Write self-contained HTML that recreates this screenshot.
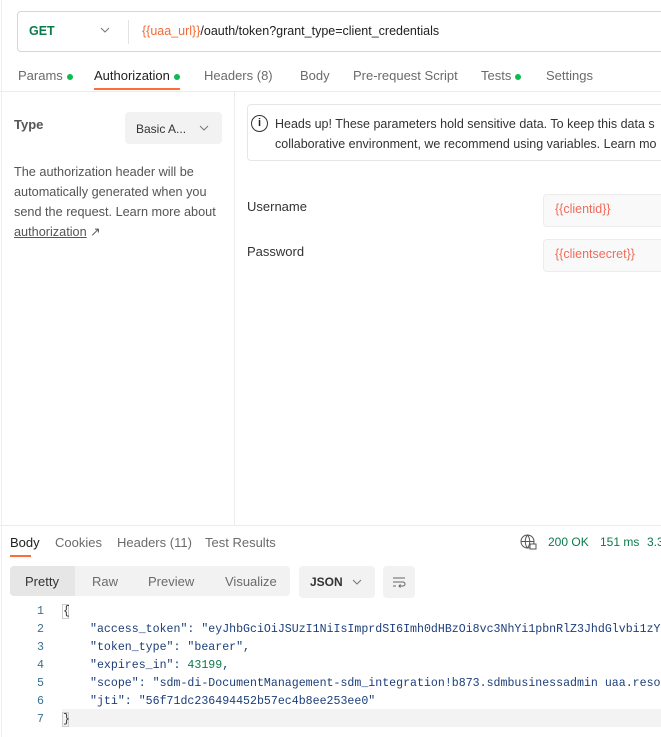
<!DOCTYPE html>
<html><head><style>
*{margin:0;padding:0;box-sizing:border-box}
html,body{width:661px;height:737px;overflow:hidden}
body{background:#fff;font-family:"Liberation Sans",sans-serif;font-size:13px;color:#212121;position:relative}
.a{position:absolute;white-space:nowrap}
.dot{display:inline-block;width:6px;height:6px;border-radius:3px;background:#0cbb52;margin-left:4px;vertical-align:middle}
.g{color:#6b6b6b}
.m{font-family:"Liberation Mono",monospace;font-size:11.6px;line-height:15px;color:#1c3e7a}
.ln{color:#3b6f8f;width:30px;text-align:right}
.chev{position:absolute}
</style></head><body>
<div class="a" style="left:1px;top:0;width:1px;height:737px;background:#eee"></div>
<div class="a" style="left:17px;top:11px;width:660px;height:41px;border:1px solid #d6d6d6;border-radius:4px"></div>
<div class="a" style="left:29px;top:24px;font-weight:bold;color:#0b7a4a;font-size:12.5px">GET</div>
<svg class="chev" style="left:100px;top:27px" width="10" height="6" viewBox="0 0 10 6" fill="none" stroke="#777" stroke-width="1"><path d="M1 1l4 4 4-4"/></svg>
<div class="a" style="left:128px;top:20px;width:1px;height:24px;background:#e3e3e3"></div>
<div class="a" style="left:142px;top:24px;font-size:12.5px"><span style="color:#f26b3a">{{uaa_url}}</span>/oauth/token?grant_type=client_credentials</div>

<div class="a g" style="left:18px;top:68px">Params<span class="dot"></span></div>
<div class="a" style="left:94px;top:68px;color:#212121">Authorization<span class="dot"></span></div>
<div class="a" style="left:94px;top:88px;width:86px;height:2px;background:#ff6c37"></div>
<div class="a g" style="left:204px;top:68px">Headers (8)</div>
<div class="a g" style="left:300px;top:68px">Body</div>
<div class="a g" style="left:353px;top:68px">Pre-request Script</div>
<div class="a g" style="left:481px;top:68px">Tests<span class="dot"></span></div>
<div class="a g" style="left:546px;top:68px">Settings</div>
<div class="a" style="left:0;top:91px;width:661px;height:1px;background:#ececec"></div>
<div class="a" style="left:234px;top:91px;width:1px;height:434px;background:#ececec"></div>

<div class="a" style="left:14px;top:117px;font-weight:bold;color:#555">Type</div>
<div class="a" style="left:125px;top:112px;width:97px;height:32px;background:#f2f2f2;border-radius:4px"></div>
<div class="a" style="left:136px;top:122px;font-size:12px;color:#333">Basic A...</div>
<svg class="chev" style="left:199px;top:125px" width="10" height="6" viewBox="0 0 10 6" fill="none" stroke="#777" stroke-width="1"><path d="M1 1l4 4 4-4"/></svg>
<div class="a" style="left:14px;top:162px;line-height:20px;color:#555;white-space:normal;width:215px;font-size:12.7px">The authorization header will be automatically generated when you send the request. Learn more about <span style="text-decoration:underline">authorization</span> &#8599;</div>

<div class="a" style="left:247px;top:104px;width:430px;height:57px;border:1px solid #e6e6e6;border-radius:4px"></div>
<div class="a" style="left:251px;top:115px;width:17px;height:17px;border:1.3px solid #333;border-radius:50%;font-size:11px;font-weight:bold;text-align:center;line-height:14px">i</div>
<div class="a" style="left:275px;top:114px;line-height:20px;color:#333;font-size:12.5px">Heads up! These parameters hold sensitive data. To keep this data s<br>collaborative environment, we recommend using variables. Learn mo</div>

<div class="a" style="left:247px;top:199px;color:#333">Username</div>
<div class="a" style="left:543px;top:194px;width:130px;height:33px;background:#f9f9f9;border:1px solid #ececec;border-radius:4px"></div>
<div class="a" style="left:555px;top:202px;color:#f26b5a;font-size:12.5px">{{clientid}}</div>
<div class="a" style="left:247px;top:244px;color:#333">Password</div>
<div class="a" style="left:543px;top:239px;width:130px;height:33px;background:#f9f9f9;border:1px solid #ececec;border-radius:4px"></div>
<div class="a" style="left:555px;top:247px;color:#f26b5a;font-size:12.5px">{{clientsecret}}</div>

<div class="a" style="left:0;top:525px;width:661px;height:1px;background:#ececec"></div>
<div class="a" style="left:10px;top:535px;color:#212121">Body</div>
<div class="a" style="left:10px;top:555px;width:21px;height:2px;background:#ff6c37"></div>
<div class="a g" style="left:55px;top:535px">Cookies</div>
<div class="a g" style="left:117px;top:535px">Headers (11)</div>
<div class="a g" style="left:205px;top:535px">Test Results</div>
<svg class="chev" style="left:520px;top:534px" width="17" height="16" viewBox="0 0 17 16" fill="none" stroke="#555" stroke-width="1"><circle cx="7.5" cy="7.5" r="6.5"/><path d="M1 7.5h13M7.5 1c-3 3.5-3 9.5 0 13M7.5 1c3 3.5 3 9.5 0 13"/><rect x="10" y="10" width="6" height="5" fill="#fff"/></svg>
<div class="a" style="left:548px;top:535px;color:#0b7a4a;font-size:12px">200 OK</div>
<div class="a" style="left:600px;top:535px;color:#0b7a4a;font-size:12px">151 ms</div>
<div class="a" style="left:647px;top:535px;color:#0b7a4a;font-size:12px">3.3</div>

<div class="a" style="left:10px;top:566px;width:280px;height:30px;background:#f2f2f2;border-radius:4px"></div>
<div class="a" style="left:10px;top:566px;width:65px;height:30px;background:#e6e6e6;border-radius:4px 0 0 4px"></div>
<div class="a" style="left:25px;top:574px;color:#333">Pretty</div>
<div class="a g" style="left:92px;top:574px">Raw</div>
<div class="a g" style="left:148px;top:574px">Preview</div>
<div class="a g" style="left:225px;top:574px">Visualize</div>
<div class="a" style="left:299px;top:566px;width:76px;height:32px;background:#f2f2f2;border-radius:4px"></div>
<div class="a" style="left:310px;top:575px;font-weight:bold;font-size:12px;color:#333">JSON</div>
<svg class="chev" style="left:352px;top:579px" width="10" height="6" viewBox="0 0 10 6" fill="none" stroke="#777" stroke-width="1"><path d="M1 1l4 4 4-4"/></svg>
<div class="a" style="left:383px;top:566px;width:32px;height:32px;background:#f2f2f2;border-radius:4px"></div>
<svg class="chev" style="left:391px;top:574px" width="16" height="16" viewBox="0 0 16 16" fill="none" stroke="#666" stroke-width="1"><path d="M2 4h12M2 8h10a2 2 0 0 1 0 4H8M9.5 10.5L8 12l1.5 1.5M2 12h3"/></svg>

<div class="a" style="left:62px;top:709px;width:599px;height:18px;background:#f3f3f3"></div>
<div class="a" style="left:62px;top:604px;width:7px;height:15px;border:1px solid #ccc"></div>
<div class="a" style="left:62px;top:712px;width:7px;height:15px;border:1px solid #ccc"></div>
<div class="a m ln" style="left:14px;top:604px">1</div>
<div class="a m ln" style="left:14px;top:622px">2</div>
<div class="a m ln" style="left:14px;top:640px">3</div>
<div class="a m ln" style="left:14px;top:658px">4</div>
<div class="a m ln" style="left:14px;top:676px">5</div>
<div class="a m ln" style="left:14px;top:694px">6</div>
<div class="a m ln" style="left:14px;top:712px">7</div>
<div class="a m" style="left:63px;top:604px;color:#333">{</div>
<div class="a m" style="left:90px;top:622px;width:571px;overflow:hidden">"access_token": "eyJhbGciOiJSUzI1NiIsImprdSI6Imh0dHBzOi8vc3NhYi1pbnRlZ3JhdGlvbi1zYnguYX</div>
<div class="a m" style="left:90px;top:640px">"token_type": "bearer",</div>
<div class="a m" style="left:90px;top:658px">"expires_in": <span style="color:#0b7a4a">43199</span>,</div>
<div class="a m" style="left:90px;top:676px;width:571px;overflow:hidden">"scope": "sdm-di-DocumentManagement-sdm_integration!b873.sdmbusinessadmin uaa.resource</div>
<div class="a m" style="left:90px;top:694px">"jti": "56f71dc236494452b57ec4b8ee253ee0"</div>
<div class="a m" style="left:63px;top:712px;color:#333">}</div>
</body></html>
